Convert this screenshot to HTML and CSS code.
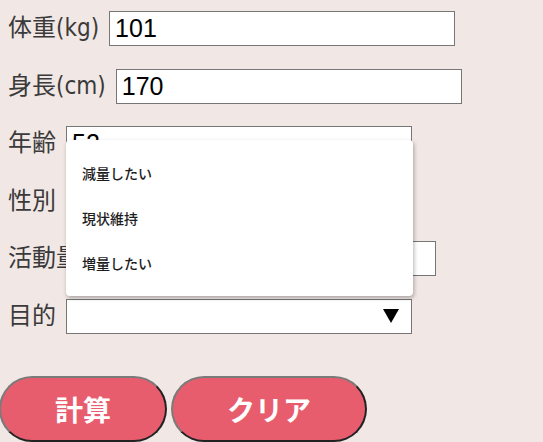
FILE: index.html
```html
<!DOCTYPE html>
<html lang="ja">
<head>
<meta charset="utf-8">
<title>カロリー計算</title>
<link rel="stylesheet" href="styles.css">
</head>
<body>
<form class="form">
  <div class="fields">
    <div class="field">
      <label class="label" for="weight">体重(kg)</label>
      <input class="input" id="weight" type="text" value="101">
    </div>
    <div class="field">
      <label class="label" for="height">身長(cm)</label>
      <input class="input" id="height" type="text" value="170">
    </div>
    <div class="field">
      <label class="label" for="age">年齢</label>
      <input class="input" id="age" type="text" value="52">
    </div>
    <div class="field">
      <label class="label" for="sex">性別</label>
      <div class="select-wrap">
        <select class="select" id="sex"><option></option></select>
      </div>
    </div>
    <div class="field">
      <label class="label" for="activity">活動量</label>
      <input class="input" id="activity" type="text" value="">
    </div>
    <div class="field">
      <label class="label" for="goal">目的</label>
      <div class="select-wrap">
        <select class="select" id="goal"><option></option></select>
        <svg class="arrow" width="16" height="14" viewBox="0 0 16 14"><polygon points="0,0 16,0 8,14" fill="#000"/></svg>
      </div>
    </div>
    <ul class="popup">
      <li class="option">減量したい</li>
      <li class="option">現状維持</li>
      <li class="option">増量したい</li>
    </ul>
  </div>
  <div class="buttons">
    <button class="btn" type="button">計算</button>
    <button class="btn" type="button">クリア</button>
  </div>
</form>
</body>
</html>
```

FILE: styles.css
```css
html, body {
  margin: 0;
  padding: 0;
  background: #f1e7e5;
  overflow: hidden;
}
body {
  font-family: "DejaVu Sans", "Noto Sans CJK JP", sans-serif;
}
.form {
  margin: 0;
}
.fields {
  position: relative;
  padding: 11px 8px 0 8px;
  display: flex;
  flex-direction: column;
  gap: 22.6px;
}
.field {
  display: flex;
  align-items: center;
  gap: 10px;
  height: 35px;
}
.label {
  font-size: 24px;
  font-stretch: semi-condensed;
  color: #3a3a3a;
  white-space: nowrap;
  line-height: 35px;
}
.input {
  box-sizing: border-box;
  width: 346px;
  height: 35px;
  border: 1px solid #767676;
  background: #fff;
  padding: 0 5px;
  font-family: "Liberation Sans", Arial, sans-serif;
  font-size: 25px;
  color: #000;
  margin: 0;
  outline: none;
}
.select-wrap {
  position: relative;
  width: 346px;
  height: 35px;
}
.select {
  appearance: none;
  -webkit-appearance: none;
  box-sizing: border-box;
  width: 100%;
  height: 35px;
  border: 1px solid #767676;
  border-radius: 0;
  background: #fff;
  margin: 0;
  font-size: 20px;
}
.arrow {
  position: absolute;
  right: 13px;
  top: 10px;
}
.popup {
  position: absolute;
  left: 66px;
  top: 140px;
  width: 347px;
  box-sizing: border-box;
  margin: 0;
  padding: 10.5px 0;
  list-style: none;
  background: #fff;
  border-radius: 4px;
  box-shadow: 1px 2px 4px rgba(0, 0, 0, 0.3);
}
.option {
  height: 45px;
  line-height: 45px;
  padding-left: 16px;
  font-family: "Noto Sans CJK JP", sans-serif;
  font-size: 14px;
  font-weight: 500;
  color: #1e1e1e;
}
.buttons {
  display: flex;
  gap: 4px;
  margin-top: 42px;
  margin-left: -1px;
}
.btn {
  box-sizing: border-box;
  height: 66px;
  padding: 0 54px;
  border-radius: 34px;
  border: 2px solid;
  border-color: #7a7a7a #222 #222 #7a7a7a;
  background: #e85d6d;
  color: #fff;
  font-family: "Noto Sans CJK JP", sans-serif;
  font-weight: 700;
  font-size: 28px;
  line-height: 1;
  cursor: pointer;
}
```
